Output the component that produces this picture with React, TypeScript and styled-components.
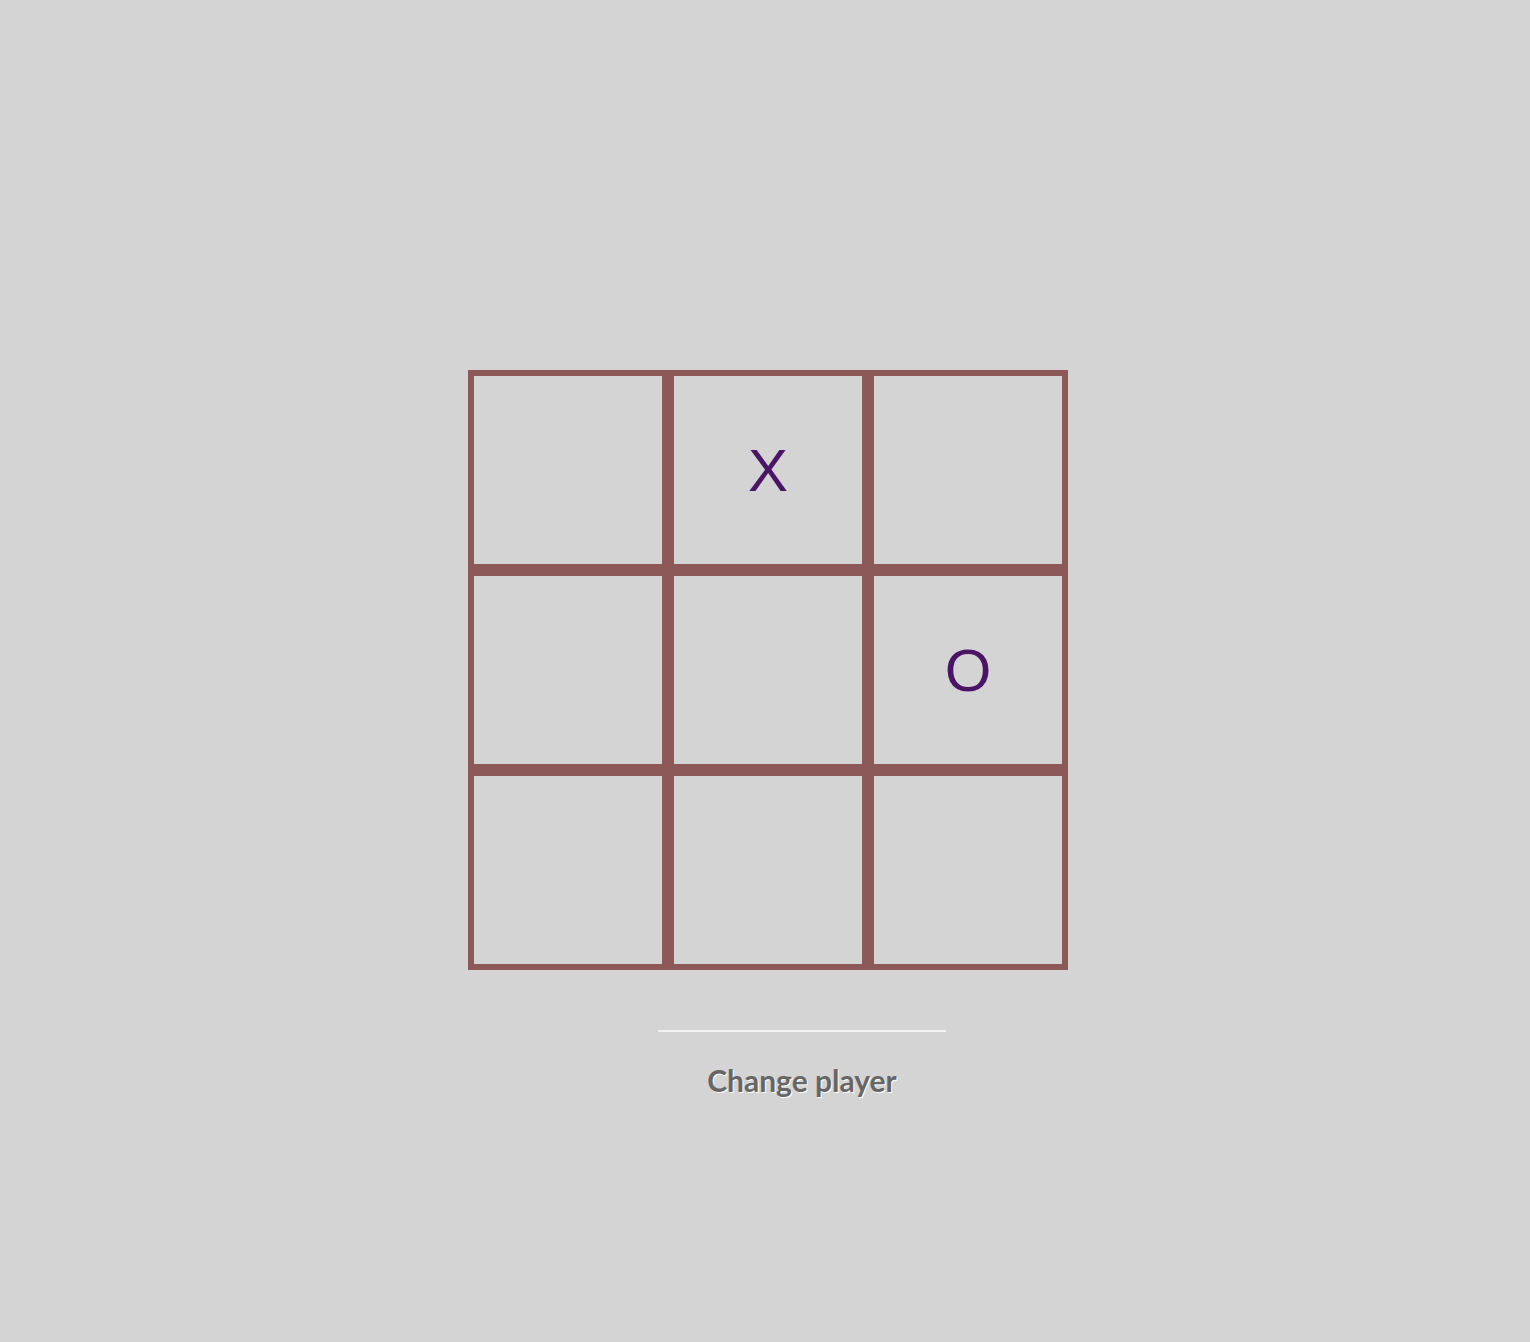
import React, {useState} from "react";
import styled, {createGlobalStyle} from "styled-components";

const GlobalStyle = createGlobalStyle`
  html, body {
    margin: 0;
    padding: 0;
    background: #d4d4d4;
  }
`

const Page = styled.div`
  min-height: 1342px;
  display: flex;
  flex-direction: column;
  align-items: center;
  padding-top: 370px;
  box-sizing: border-box;
  font-family: 'Liberation Sans', Arial, sans-serif;
`

const Board = styled.div`
  display: grid;
  grid-template-columns: repeat(3, 200px);
  grid-template-rows: repeat(3, 200px);
  margin-left: 6px;
`

const Cell = styled.button`
  box-sizing: border-box;
  width: 200px;
  height: 200px;
  border: 6px solid #8c5858;
  background: transparent;
  padding: 0;
  margin: 0;
  display: flex;
  align-items: center;
  justify-content: center;
  font-family: 'Liberation Sans', Arial, sans-serif;
  font-size: 60px;
  color: #4a1566;
  cursor: pointer;
  outline: none;
`

const Footer = styled.div`
  width: 288px;
  margin-left: 74px;
  margin-top: 60px;
  display: flex;
  flex-direction: column;
  align-items: center;
`

const Divider = styled.div`
  width: 100%;
  height: 2px;
  background: #f2f2f2;
`

const ChangeButton = styled.button`
  margin-top: 30px;
  background: none;
  border: none;
  padding: 0;
  font-family: Lato, 'Open Sans', sans-serif;
  font-weight: 700;
  font-size: 30px;
  line-height: 1.2;
  color: #666666;
  text-shadow: 1px 1px 0 #ffffff;
  cursor: pointer;
`

const INITIAL: string[] = ['', 'X', '', '', '', 'O', '', '', '']

export default function App() {
  const [cells] = useState(INITIAL)
  return (
    <>
      <GlobalStyle/>
      <Page>
        <Board>
          {cells.map((value, i) => (
            <Cell key={i}>{value}</Cell>
          ))}
        </Board>
        <Footer>
          <Divider/>
          <ChangeButton>Change player</ChangeButton>
        </Footer>
      </Page>
    </>
  )
}
